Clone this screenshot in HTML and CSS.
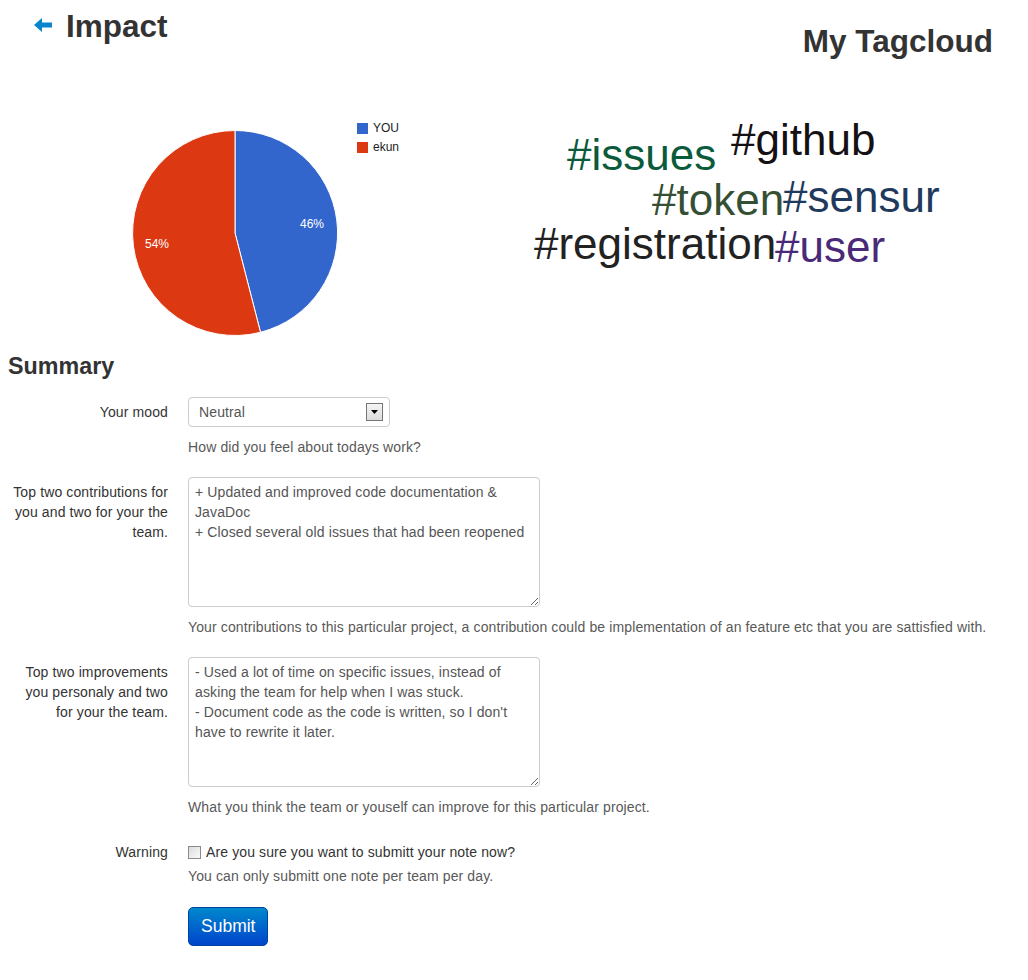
FILE: index.html
```html
<!DOCTYPE html>
<html>
<head>
<meta charset="utf-8">
<title>Impact</title>
<link rel="stylesheet" href="styles.css">
</head>
<body>
<div class="page">
  <div class="top">
    <div class="left-col">
      <h2 class="title"><a class="back" href="#"><svg width="18" height="14" viewBox="0 0 18 14"><path d="M0 7 L8 0 L8 4.5 L18 4.5 L18 9.5 L8 9.5 L8 14 Z" fill="#0a85cc"/></svg></a>Impact</h2>
      <svg class="chart" width="480" height="236" viewBox="0 0 480 236">
        <path d="M227 133 L227 30.5 A102.5 102.5 0 0 1 252.5 232.3 Z" fill="#3366cc" stroke="#fff" stroke-width="1"/>
        <path d="M227 133 L252.5 232.3 A102.5 102.5 0 1 1 227 30.5 Z" fill="#dc3912" stroke="#fff" stroke-width="1"/>
        <text x="292" y="128" class="pct">46%</text>
        <text x="137" y="148" class="pct">54%</text>
        <rect x="349" y="23" width="11" height="11" fill="#3366cc"/>
        <text x="365" y="32" class="leg">YOU</text>
        <rect x="349" y="42" width="11" height="11" fill="#dc3912"/>
        <text x="365" y="51" class="leg">ekun</text>
      </svg>
    </div>
    <div class="right-col">
      <h2 class="title cloud-title">My Tagcloud</h2>
      <div class="cloud">
        <span class="tag t-issues">#issues</span>
        <span class="tag t-github">#github</span>
        <span class="tag t-token">#token</span>
        <span class="tag t-sensur">#sensur</span>
        <span class="tag t-registration">#registration</span>
        <span class="tag t-user">#user</span>
      </div>
    </div>
  </div>

  <h3 class="summary">Summary</h3>
  <form class="form">
    <div class="group">
      <label class="lbl">Your mood</label>
      <div class="controls">
        <div class="select-wrap">
          <select class="select"><option>Neutral</option></select>
          <span class="select-btn"><svg width="7" height="4" viewBox="0 0 7 4"><path d="M0 0 H7 L3.5 4 Z" fill="#000"/></svg></span>
        </div>
        <p class="help">How did you feel about todays work?</p>
      </div>
    </div>
    <div class="group">
      <label class="lbl">Top two contributions for you and two for your the team.</label>
      <div class="controls">
        <textarea class="area">+ Updated and improved code documentation &amp; JavaDoc
+ Closed several old issues that had been reopened</textarea>
        <p class="help">Your contributions to this particular project, a contribution could be implementation of an feature etc that you are sattisfied with.</p>
      </div>
    </div>
    <div class="group">
      <label class="lbl">Top two improvements you personaly and two for your the team.</label>
      <div class="controls">
        <textarea class="area">- Used a lot of time on specific issues, instead of asking the team for help when I was stuck.
- Document code as the code is written, so I don't have to rewrite it later.</textarea>
        <p class="help">What you think the team or youself can improve for this particular project.</p>
      </div>
    </div>
    <div class="group">
      <label class="lbl">Warning</label>
      <div class="controls">
        <label class="check"><input type="checkbox" class="cb"> Are you sure you want to submitt your note now?</label>
        <p class="help help-tight">You can only submitt one note per team per day.</p>
      </div>
    </div>
    <div class="actions">
      <button type="button" class="btn">Submit</button>
    </div>
  </form>
</div>
</body>
</html>
```
FILE: styles.css
```css
html, body {
  margin: 0;
  padding: 0;
  background: #fff;
}
body {
  font-family: "Liberation Sans", Arial, sans-serif;
  font-size: 14px;
  line-height: 20px;
  color: #333;
  letter-spacing: 0.12px;
}
.page {
  padding: 0 8px;
}
.top {
  display: flex;
  align-items: flex-start;
  height: 336px;
  letter-spacing: 0;
}
.left-col {
  width: 500px;
  flex: none;
}
.right-col {
  flex: 1;
}
.title {
  font-size: 31.5px;
  line-height: 40px;
  font-weight: bold;
  color: #333;
  margin: 6px 0 0 0;
}
.left-col .title {
  display: flex;
  align-items: center;
  padding-left: 26px;
}
.back {
  display: flex;
  margin-right: 14px;
  margin-top: -2px;
}
.chart {
  display: block;
  margin-top: 54px;
}
.pct {
  font-family: "Liberation Sans", Arial, sans-serif;
  font-size: 12px;
  fill: #fff;
}
.leg {
  font-family: "Liberation Sans", Arial, sans-serif;
  font-size: 12px;
  fill: #222;
}
.cloud-title {
  text-align: right;
  margin-top: 21px;
  padding-right: 27px;
}
.cloud {
  position: relative;
  height: 240px;
}
.tag {
  position: absolute;
  font-size: 44px;
  line-height: 44px;
  white-space: nowrap;
  font-family: "Liberation Sans", Arial, sans-serif;
}
.t-issues { left: 59px; top: 72px; color: #0b5a3c; }
.t-github { left: 223px; top: 57px; color: #151013; }
.t-token { left: 144px; top: 117px; color: #354f35; }
.t-sensur { left: 275px; top: 114px; color: #1f3a5c; }
.t-registration { left: 26px; top: 161px; color: #222; }
.t-user { left: 267px; top: 164px; color: #4a2a78; }

.summary {
  font-size: 23.3px;
  line-height: 40px;
  font-weight: bold;
  margin: 10px 0 11px 0;
  color: #333;
  letter-spacing: 0;
}
.form {
  margin: 0;
}
.group {
  display: flex;
  margin-bottom: 20px;
}
.lbl {
  width: 160px;
  flex: none;
  text-align: right;
  padding-top: 5px;
  margin-right: 20px;
}
.controls {
  flex: 1;
}
.select-wrap {
  position: relative;
  width: 202px;
  height: 30px;
}
.select {
  appearance: none;
  -webkit-appearance: none;
  width: 202px;
  height: 30px;
  box-sizing: border-box;
  border: 1px solid #ccc;
  border-radius: 4px;
  background: #fff;
  font-family: "Liberation Sans", Arial, sans-serif;
  font-size: 14px;
  letter-spacing: 0.12px;
  color: #555;
  padding: 4px 10px;
  margin: 0;
}
.select-btn {
  position: absolute;
  top: 6px;
  right: 7px;
  width: 15px;
  height: 16px;
  border: 1px solid #767676;
  background: linear-gradient(#f4f4f4, #dcdcdc);
  display: flex;
  align-items: center;
  justify-content: center;
  pointer-events: none;
}
.help {
  margin: 10px 0 0 0;
  color: #595959;
}
.help-tight {
  margin-top: 4px;
}
.area {
  display: block;
  width: 352px;
  height: 130px;
  box-sizing: border-box;
  padding: 4px 6px;
  border: 1px solid #ccc;
  border-radius: 4px;
  font-family: "Liberation Sans", Arial, sans-serif;
  font-size: 14px;
  line-height: 20px;
  letter-spacing: 0.12px;
  color: #555;
  resize: both;
  margin: 0;
}
.check {
  display: flex;
  align-items: center;
  padding-top: 5px;
  line-height: 20px;
}
.cb {
  appearance: none;
  -webkit-appearance: none;
  width: 13px;
  height: 13px;
  margin: 0 5px 0 0;
  border: 1px solid #8a8a8a;
  background: linear-gradient(135deg, #dcdcdc, #fbfbfb);
  box-sizing: border-box;
  flex: none;
}
.actions {
  padding-left: 180px;
}
.btn {
  font-family: "Liberation Sans", Arial, sans-serif;
  font-size: 17.5px;
  line-height: 21px;
  letter-spacing: 0;
  color: #fff;
  padding: 8px 12px;
  margin-top: 1px;
  border: 1px solid #0044a0;
  border-radius: 5px;
  background: linear-gradient(#0088cc, #0044cc);
  cursor: pointer;
}
```
